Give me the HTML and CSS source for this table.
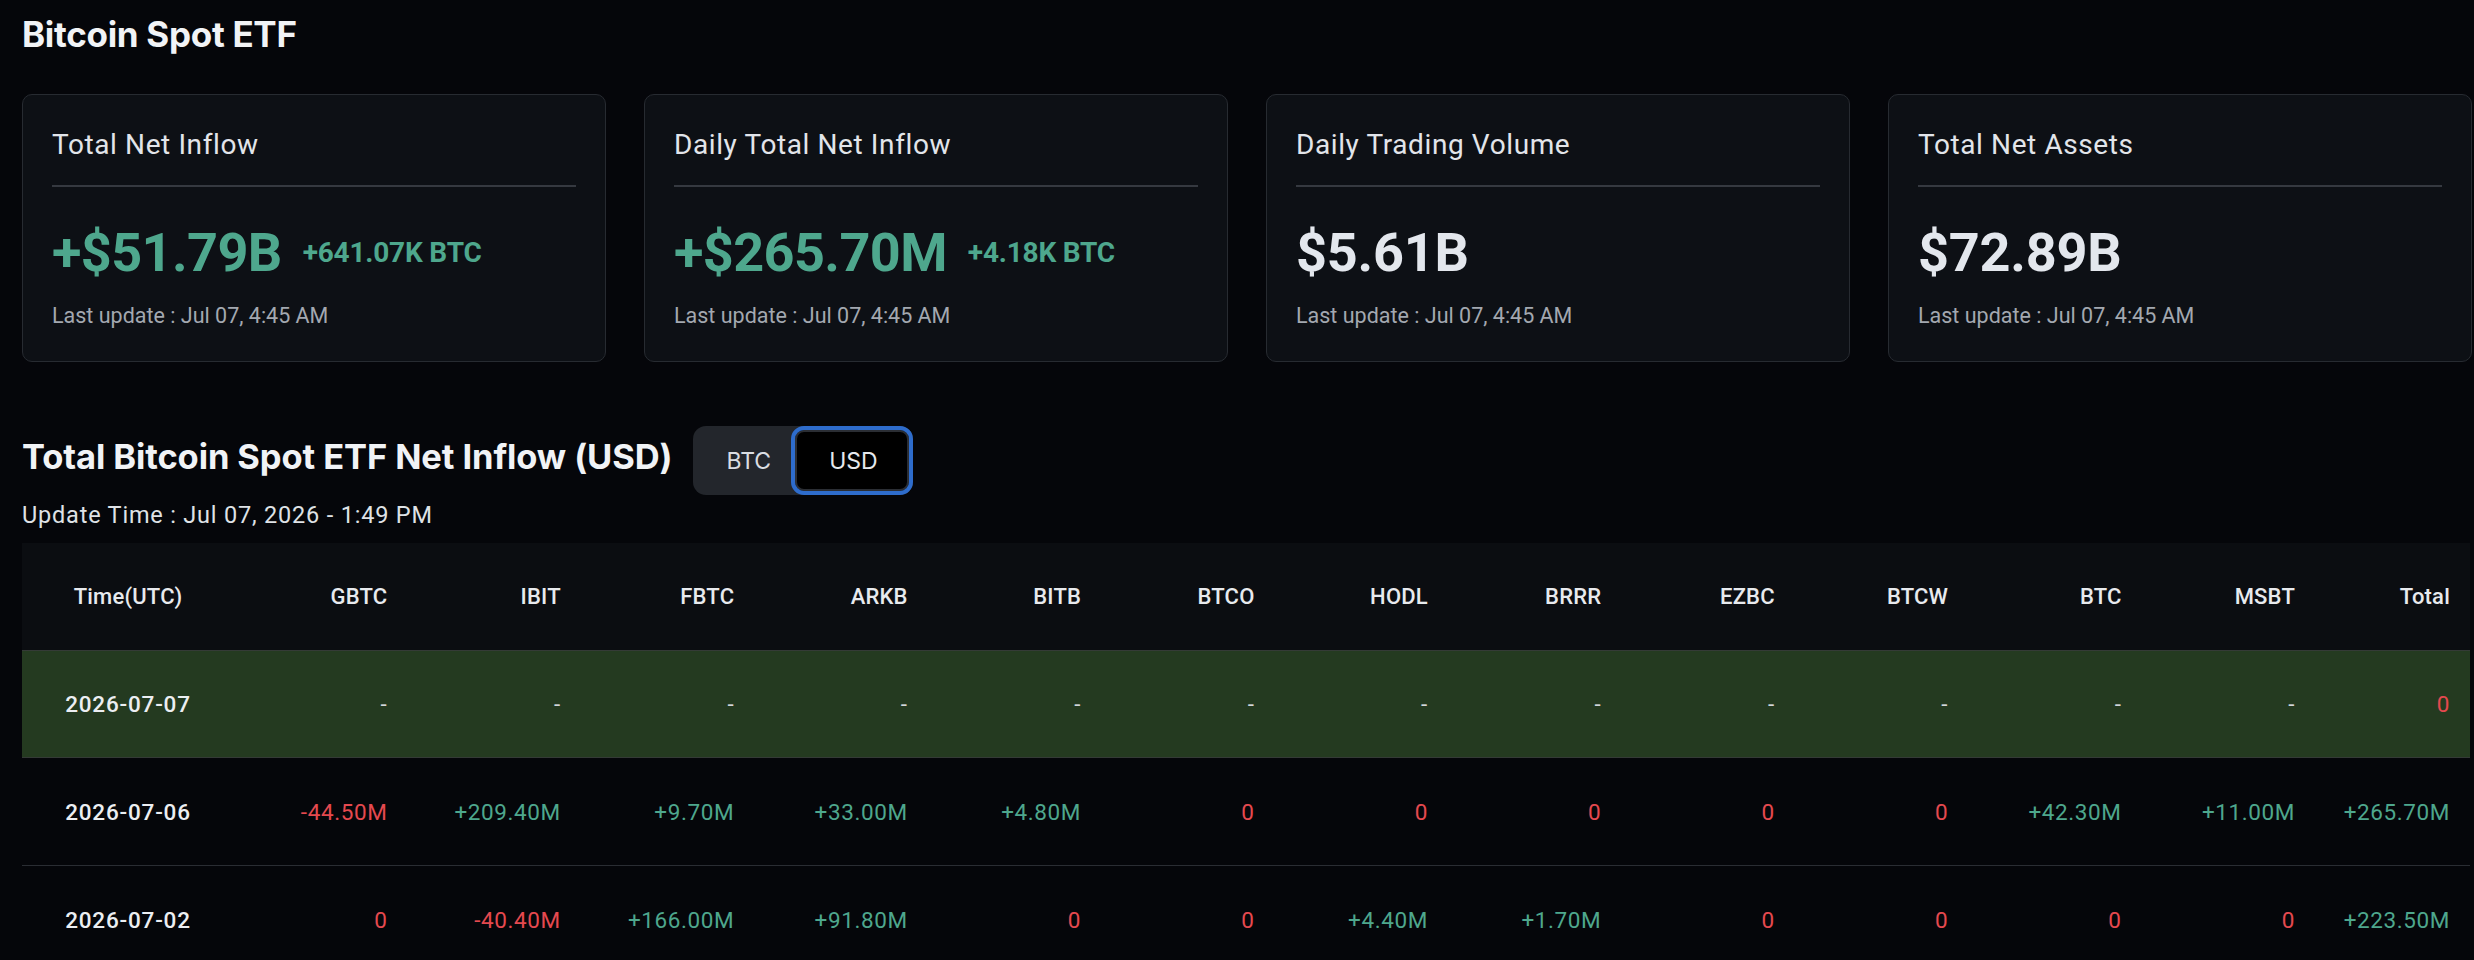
FILE: index.html
```html
<!DOCTYPE html>
<html lang="en">
<head>
<meta charset="utf-8">
<title>Bitcoin Spot ETF</title>
<link rel="stylesheet" href="styles.css">
</head>
<body>
<div class="page">
  <h1 class="page-title">Bitcoin Spot ETF</h1>

  <div class="cards">
    <div class="card">
      <div class="card-title">Total Net Inflow</div>
      <div class="card-divider"></div>
      <div class="card-value-row">
        <span class="card-value up">+$51.79B</span>
        <span class="card-sub up">+641.07K BTC</span>
      </div>
      <div class="card-update">Last update : Jul 07, 4:45 AM</div>
    </div>
    <div class="card">
      <div class="card-title">Daily Total Net Inflow</div>
      <div class="card-divider"></div>
      <div class="card-value-row">
        <span class="card-value up">+$265.70M</span>
        <span class="card-sub up">+4.18K BTC</span>
      </div>
      <div class="card-update">Last update : Jul 07, 4:45 AM</div>
    </div>
    <div class="card">
      <div class="card-title">Daily Trading Volume</div>
      <div class="card-divider"></div>
      <div class="card-value-row">
        <span class="card-value">$5.61B</span>
      </div>
      <div class="card-update">Last update : Jul 07, 4:45 AM</div>
    </div>
    <div class="card">
      <div class="card-title">Total Net Assets</div>
      <div class="card-divider"></div>
      <div class="card-value-row">
        <span class="card-value">$72.89B</span>
      </div>
      <div class="card-update">Last update : Jul 07, 4:45 AM</div>
    </div>
  </div>

  <div class="section-head">
    <h2 class="section-title">Total Bitcoin Spot ETF Net Inflow (USD)</h2>
    <div class="toggle">
      <button class="toggle-btn">BTC</button>
      <button class="toggle-btn active">USD</button>
    </div>
  </div>
  <div class="update-time">Update Time : Jul 07, 2026 - 1:49 PM</div>

  <div class="table">
    <div class="row head">
      <div class="cell first">Time(UTC)</div>
      <div class="cell">GBTC</div>
      <div class="cell">IBIT</div>
      <div class="cell">FBTC</div>
      <div class="cell">ARKB</div>
      <div class="cell">BITB</div>
      <div class="cell">BTCO</div>
      <div class="cell">HODL</div>
      <div class="cell">BRRR</div>
      <div class="cell">EZBC</div>
      <div class="cell">BTCW</div>
      <div class="cell">BTC</div>
      <div class="cell">MSBT</div>
      <div class="cell">Total</div>
    </div>
    <div class="row today">
      <div class="cell first date">2026-07-07</div>
      <div class="cell dash">-</div>
      <div class="cell dash">-</div>
      <div class="cell dash">-</div>
      <div class="cell dash">-</div>
      <div class="cell dash">-</div>
      <div class="cell dash">-</div>
      <div class="cell dash">-</div>
      <div class="cell dash">-</div>
      <div class="cell dash">-</div>
      <div class="cell dash">-</div>
      <div class="cell dash">-</div>
      <div class="cell dash">-</div>
      <div class="cell down">0</div>
    </div>
    <div class="row">
      <div class="cell first date">2026-07-06</div>
      <div class="cell down">-44.50M</div>
      <div class="cell up">+209.40M</div>
      <div class="cell up">+9.70M</div>
      <div class="cell up">+33.00M</div>
      <div class="cell up">+4.80M</div>
      <div class="cell down">0</div>
      <div class="cell down">0</div>
      <div class="cell down">0</div>
      <div class="cell down">0</div>
      <div class="cell down">0</div>
      <div class="cell up">+42.30M</div>
      <div class="cell up">+11.00M</div>
      <div class="cell up">+265.70M</div>
    </div>
    <div class="row">
      <div class="cell first date">2026-07-02</div>
      <div class="cell down">0</div>
      <div class="cell down">-40.40M</div>
      <div class="cell up">+166.00M</div>
      <div class="cell up">+91.80M</div>
      <div class="cell down">0</div>
      <div class="cell down">0</div>
      <div class="cell up">+4.40M</div>
      <div class="cell up">+1.70M</div>
      <div class="cell down">0</div>
      <div class="cell down">0</div>
      <div class="cell down">0</div>
      <div class="cell down">0</div>
      <div class="cell up">+223.50M</div>
    </div>
  </div>
</div>
</body>
</html>
```

FILE: styles.css
```css
* { box-sizing: border-box; }

html, body {
  margin: 0;
  padding: 0;
  background: #05060a;
  overflow: hidden;
}

body {
  font-family: Roboto, "Liberation Sans", sans-serif;
  color: #e4e7eb;
}

.page {
  width: 2472px;
  padding-left: 22px;
}

.page-title {
  margin: 12px 0 38px;
  font-family: Inter, "Liberation Sans", sans-serif;
  font-weight: 700;
  font-size: 35px;
  line-height: 44px;
  letter-spacing: -0.3px;
  color: #f1f3f6;
}

.cards {
  display: grid;
  grid-template-columns: repeat(4, 584px);
  column-gap: 38px;
}

.card {
  background: #0d1015;
  border: 1px solid #272b31;
  border-radius: 10px;
  padding: 32px 29px 31px;
}

.card-title {
  font-size: 28px;
  line-height: 36px;
  letter-spacing: 0.6px;
  color: #e2e5ea;
}

.card-divider {
  height: 2px;
  margin-top: 22px;
  background: #353940;
}

.card-value-row {
  display: flex;
  align-items: center;
  gap: 21px;
  margin-top: 34px;
  height: 64px;
}

.card-value {
  font-weight: 700;
  font-size: 54px;
  line-height: 64px;
  color: #e3e7ed;
  letter-spacing: -0.2px;
}

.card-value.up {
  letter-spacing: -0.6px;
}

.card-sub {
  font-weight: 700;
  font-size: 28px;
  line-height: 36px;
  letter-spacing: -0.2px;
}

.card-update {
  margin-top: 17px;
  font-size: 21.5px;
  line-height: 28px;
  color: #a3a8b0;
}

.up { color: #4ea78d; }
.down { color: #e5494f; }

.section-head {
  display: flex;
  align-items: center;
  gap: 21px;
  margin-top: 64px;
  height: 69px;
}

.section-title {
  margin: 0 0 8px;
  font-family: Inter, "Liberation Sans", sans-serif;
  font-weight: 700;
  font-size: 34.5px;
  line-height: 42px;
  letter-spacing: -0.1px;
  color: #f1f3f6;
}

.toggle {
  display: flex;
  height: 69px;
  background: #23262c;
  border-radius: 13px;
}

.toggle-btn {
  font-family: Inter, "Liberation Sans", sans-serif;
  font-size: 23px;
  color: #dadde2;
  background: transparent;
  border: none;
  padding: 0 20px 0 33px;
  height: 69px;
  border-radius: 13px;
}

.toggle-btn.active {
  background: #000;
  border: 4px solid #2e6ccc;
  box-shadow: inset 0 0 0 2px #2b2e34;
  padding: 0 31px 0 34px;
  color: #e6e9ed;
}

.update-time {
  margin-top: 6px;
  font-size: 23.5px;
  line-height: 28px;
  letter-spacing: 0.8px;
  color: #dfe2e6;
}

.table {
  margin-top: 14px;
  width: 2448px;
}

.row {
  display: grid;
  grid-template-columns: 212px repeat(12, 1fr) 155px;
  align-items: center;
  height: 108px;
  border-bottom: 1px solid #2a2d33;
}

.row.head {
  height: 107px;
  background: #0b0d11;
  border-bottom: none;
}

.row.today {
  background: #243a20;
  border-top: 1px solid #343a36;
  border-bottom: 1px solid #343a36;
}

.cell {
  text-align: right;
  padding-right: 20px;
  font-size: 22.5px;
  line-height: 28px;
  letter-spacing: 0.6px;
  white-space: nowrap;
}

.row.head .cell {
  font-weight: 500;
  font-size: 22px;
  letter-spacing: 0.2px;
  color: #e8eaee;
}

.cell.first {
  text-align: center;
  padding-right: 0;
}

.cell.date {
  font-weight: 500;
  letter-spacing: 0.8px;
  color: #eceef2;
}

.cell.dash {
  color: #d3d6db;
}
```
